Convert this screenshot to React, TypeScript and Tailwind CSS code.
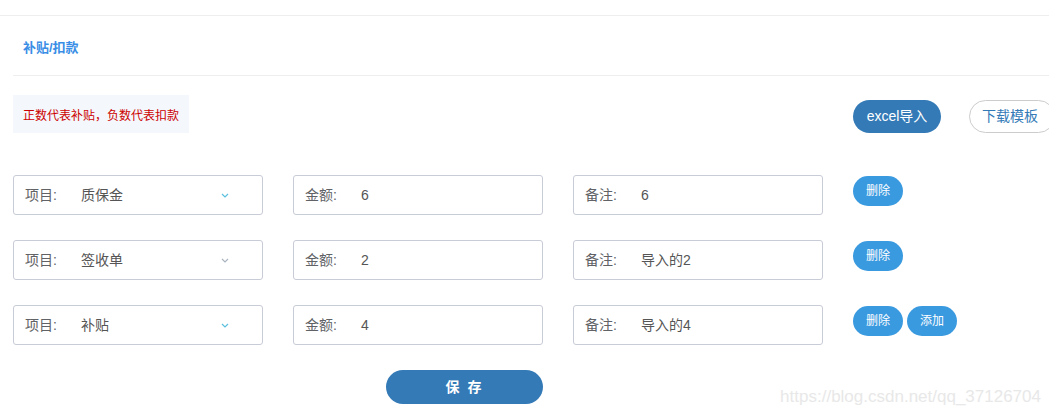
const font = { fontFamily: '"Liberation Sans", "Noto Sans CJK SC", sans-serif' };

const rows = [
  { item: "质保金", amount: "6", note: "6", chevron: "text-[#5bc0de]", add: false },
  { item: "签收单", amount: "2", note: "导入的2", chevron: "text-[#aab4c0]", add: false },
  { item: "补贴", amount: "4", note: "导入的4", chevron: "text-[#5bc0de]", add: true },
];

const Field = ({ label, value, chevron }: { label: string; value: string; chevron?: string }) => (
  <div className="flex h-10 w-[250px] items-center rounded-[3px] border border-[#c8ccd6] bg-white pt-px text-[14px]">
    <span className="ml-[11px] w-[56px] text-[#606266]">{label}</span>
    <span className="text-[#555]">{value}</span>
    {chevron && (
      <svg className={`ml-auto mr-[33px] ${chevron}`} width="8" height="5" viewBox="0 0 8 5" fill="none">
        <path d="M1 1l3 3 3-3" stroke="currentColor" strokeWidth="1.2" />
      </svg>
    )}
  </div>
);

export default function App() {
  return (
    <div style={font} className="relative h-[415px] w-[1049px] overflow-hidden bg-white">
      <div className="h-4 border-b border-[#eeeeee]" />
      <div className="ml-[13px] flex h-[60px] items-center border-b border-[#eeeeee] pl-[10px] pt-[5px]">
        <span className="text-[13px] font-bold text-[#3a8ee6]">补贴/扣款</span>
      </div>
      <div className="mt-[19px] flex items-start pl-[13px]">
        <div className="flex h-[38px] w-[176px] shrink-0 items-center whitespace-nowrap bg-[#f4f8fc] pl-[10px] pt-[3px] text-[12px] text-[#cc0000]">
          正数代表补贴，负数代表扣款
        </div>
        <button className="ml-[664px] mt-[5px] h-[33px] w-[88px] shrink-0 rounded-full bg-[#337ab7] text-[14px] text-white">
          excel导入
        </button>
        <button className="ml-[28px] mt-[5px] h-[33px] w-[86px] shrink-0 rounded-full border border-[#cccccc] bg-white pr-[4px] text-[14px] text-[#337ab7]">
          下载模板
        </button>
      </div>
      <div className="mt-[42px] flex flex-col gap-[25px] pl-[13px]">
        {rows.map((r, i) => (
          <div key={i} className="flex items-start gap-[30px]">
            <Field label="项目:" value={r.item} chevron={r.chevron} />
            <Field label="金额:" value={r.amount} />
            <Field label="备注:" value={r.note} />
            <div className="flex gap-[4px]">
              <button className="mt-px h-[30px] w-[50px] rounded-full bg-[#3a9ae0] text-[12px] text-white">删除</button>
              {r.add && (
                <button className="mt-px h-[30px] w-[50px] rounded-full bg-[#3a9ae0] text-[12px] text-white">添加</button>
              )}
            </div>
          </div>
        ))}
      </div>
      <div className="mt-[25px] pl-[386px]">
        <button className="h-[34px] w-[157px] rounded-full bg-[#337ab7] text-[14px] font-bold tracking-[2px] text-white">
          保 存
        </button>
      </div>
      <div className="absolute bottom-[6px] right-[8px] text-[17px] text-[#e8e8e8]">https://blog.csdn.net/qq_37126704</div>
    </div>
  );
}
